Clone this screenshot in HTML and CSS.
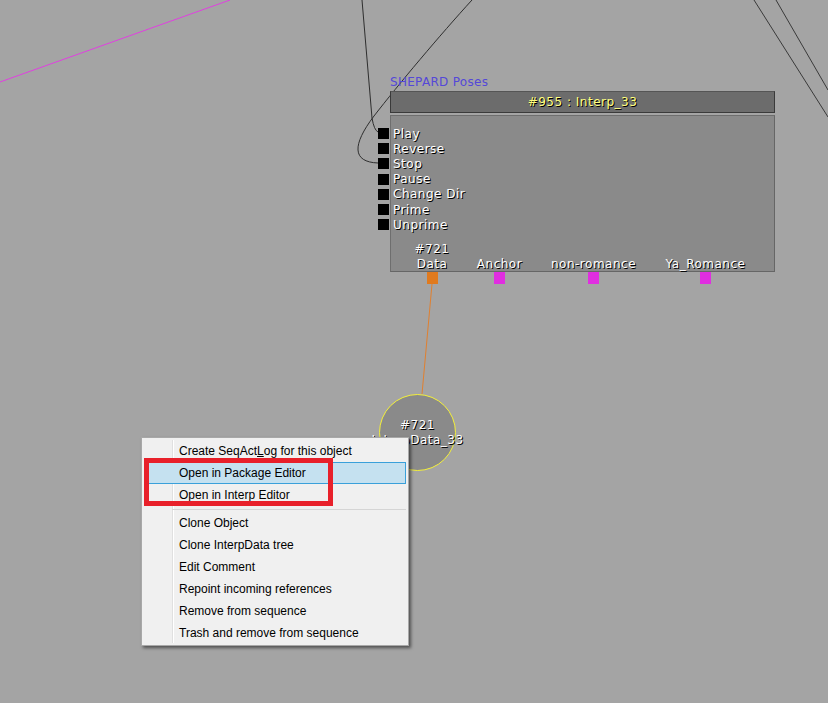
FILE: index.html
```html
<!DOCTYPE html>
<html>
<head>
<meta charset="utf-8">
<link rel="stylesheet" href="styles.css">
</head>
<body>
<div class="canvas">
  <svg class="wires" width="828" height="703" viewBox="0 0 828 703">
    <path d="M0 82 L230 0" stroke="#e040e0" fill="none" stroke-width="1"/>
    <path d="M362 0 L372 118 Q374 130 378 132" stroke="#2e2e2e" fill="none" stroke-width="1"/>
    <path d="M472 0 C440 35 398 85 374 116 C352 145 352 162 378 163" stroke="#2e2e2e" fill="none" stroke-width="1"/>
    <path d="M754 0 L828 117" stroke="#3a3a3a" fill="none" stroke-width="1"/>
    <path d="M776 0 L828 90" stroke="#3a3a3a" fill="none" stroke-width="1"/>
    <path d="M432 284 L422 394" stroke="#e08030" fill="none" stroke-width="1"/>
  </svg>

  <div class="node">
    <div class="node-label">SHEPARD Poses</div>
    <div class="node-title">#955 : Interp_33</div>
    <div class="node-body">
      <div class="inputs">
        <div class="in-row"><span class="in-port"></span><span class="txt">Play</span></div>
        <div class="in-row"><span class="in-port"></span><span class="txt">Reverse</span></div>
        <div class="in-row"><span class="in-port"></span><span class="txt">Stop</span></div>
        <div class="in-row"><span class="in-port"></span><span class="txt">Pause</span></div>
        <div class="in-row"><span class="in-port"></span><span class="txt">Change Dir</span></div>
        <div class="in-row"><span class="in-port"></span><span class="txt">Prime</span></div>
        <div class="in-row"><span class="in-port"></span><span class="txt">Unprime</span></div>
      </div>
      <div class="outputs">
        <div class="out-col c1"><span class="txt">#721</span><span class="txt">Data</span><span class="out-port orange"></span></div>
        <div class="out-col c2"><span class="txt">Anchor</span><span class="out-port magenta"></span></div>
        <div class="out-col c3"><span class="txt">non-romance</span><span class="out-port magenta"></span></div>
        <div class="out-col c4"><span class="txt">Ya_Romance</span><span class="out-port magenta"></span></div>
      </div>
    </div>
  </div>

  <div class="var-node">
    <span class="txt">#721</span>
    <span class="txt">InterpData_33</span>
  </div>

  <div class="menu">
    <div class="item">Create SeqAct<u>L</u>og for this object</div>
    <div class="item active">Open in Package Editor</div>
    <div class="item">Open in Interp Editor</div>
    <div class="sep"></div>
    <div class="item">Clone Object</div>
    <div class="item">Clone InterpData tree</div>
    <div class="item">Edit Comment</div>
    <div class="item">Repoint incoming references</div>
    <div class="item">Remove from sequence</div>
    <div class="item">Trash and remove from sequence</div>
  </div>

  <div class="highlight-box"></div>
</div>
</body>
</html>
```

FILE: styles.css
```css
html, body {
  margin: 0;
  padding: 0;
}
body {
  background: #a4a4a4;
  width: 828px;
  height: 703px;
  overflow: hidden;
}
.canvas {
  position: relative;
  width: 828px;
  height: 703px;
  font-family: "DejaVu Sans", sans-serif;
  font-size: 12px;
}
.wires {
  position: absolute;
  left: 0;
  top: 0;
}
.txt {
  color: #ffffff;
  text-shadow: 1px 1px 0 #000;
  white-space: nowrap;
  letter-spacing: 0.5px;
}

/* sequence node */
.node {
  position: absolute;
  left: 390px;
  top: 75px;
  width: 385px;
  display: flex;
  flex-direction: column;
}
.node-label {
  color: #5448d8;
  height: 14px;
  line-height: 15px;
  margin-bottom: 2px;
  white-space: nowrap;
  letter-spacing: 0.3px;
}
.node-title {
  box-sizing: border-box;
  height: 22px;
  line-height: 21px;
  background: #6c6c6c;
  border: 1px solid #3a3a3a;
  border-top-color: #555;
  color: #ffff80;
  text-shadow: 1px 1px 0 #000;
  text-align: center;
  letter-spacing: 0.5px;
}
.node-body {
  box-sizing: border-box;
  margin-top: 2px;
  height: 157px;
  background: #8a8a8a;
  border: 1px solid #6e6e6e;
  border-right-color: #666;
  border-bottom-color: #666;
  display: flex;
  flex-direction: column;
}
.inputs {
  padding-top: 10px;
  display: flex;
  flex-direction: column;
}
.in-row {
  height: 15.2px;
  display: flex;
  align-items: center;
}
.in-port {
  width: 11px;
  height: 11px;
  background: #000;
  margin-left: -13px;
  margin-right: 4px;
  flex: none;
}
.outputs {
  margin-top: auto;
  margin-bottom: -13px;
  padding-left: 11px;
  display: flex;
  align-items: flex-end;
}
.out-col {
  display: flex;
  flex-direction: column;
  align-items: center;
  line-height: 15px;
}
.c1 { width: 60px; }
.c2 { width: 75px; }
.c3 { width: 113px; }
.c4 { width: 111px; }
.out-port {
  width: 11px;
  height: 12px;
  margin-top: 0;
}
.orange { background: #e07a1e; }
.magenta { background: #e02ee0; }

/* variable node */
.var-node {
  position: absolute;
  left: 379px;
  top: 394px;
  width: 77px;
  height: 77px;
  box-sizing: border-box;
  border-radius: 50%;
  background: #8a8a8a;
  border: 1px solid #f4f03a;
  display: flex;
  flex-direction: column;
  align-items: center;
  justify-content: center;
  line-height: 15px;
}

/* context menu */
.menu {
  position: absolute;
  left: 141px;
  top: 437px;
  width: 268px;
  box-sizing: border-box;
  background: #f0f0f0;
  border: 1px solid #a8a8a8;
  padding: 2px 2px 1px 2px;
  box-shadow: 2px 2px 3px rgba(0, 0, 0, 0.5);
  font-family: "Liberation Sans", Arial, sans-serif;
  font-size: 12px;
  color: #000;
}
.menu::before {
  content: "";
  position: absolute;
  left: 30px;
  top: 2px;
  bottom: 2px;
  width: 1px;
  background: #e0e0e0;
  border-right: 1px solid #ffffff;
}
.item {
  position: relative;
  height: 22px;
  line-height: 23px;
  padding-left: 35px;
  box-sizing: border-box;
  white-space: nowrap;
}
.item u {
  text-decoration: underline;
}
.item.active {
  background: #c5e1f0;
  border: 1px solid #3aa0da;
  line-height: 21px;
  padding-left: 34px;
}
.sep {
  position: relative;
  height: 6px;
  margin-left: 28px;
  display: flex;
  align-items: center;
}
.sep::after {
  content: "";
  flex: 1;
  height: 1px;
  background: #d5d5d5;
}

/* annotation */
.highlight-box {
  position: absolute;
  left: 144px;
  top: 458px;
  width: 189px;
  height: 48px;
  box-sizing: border-box;
  border: 5px solid #e8202a;
}
```
